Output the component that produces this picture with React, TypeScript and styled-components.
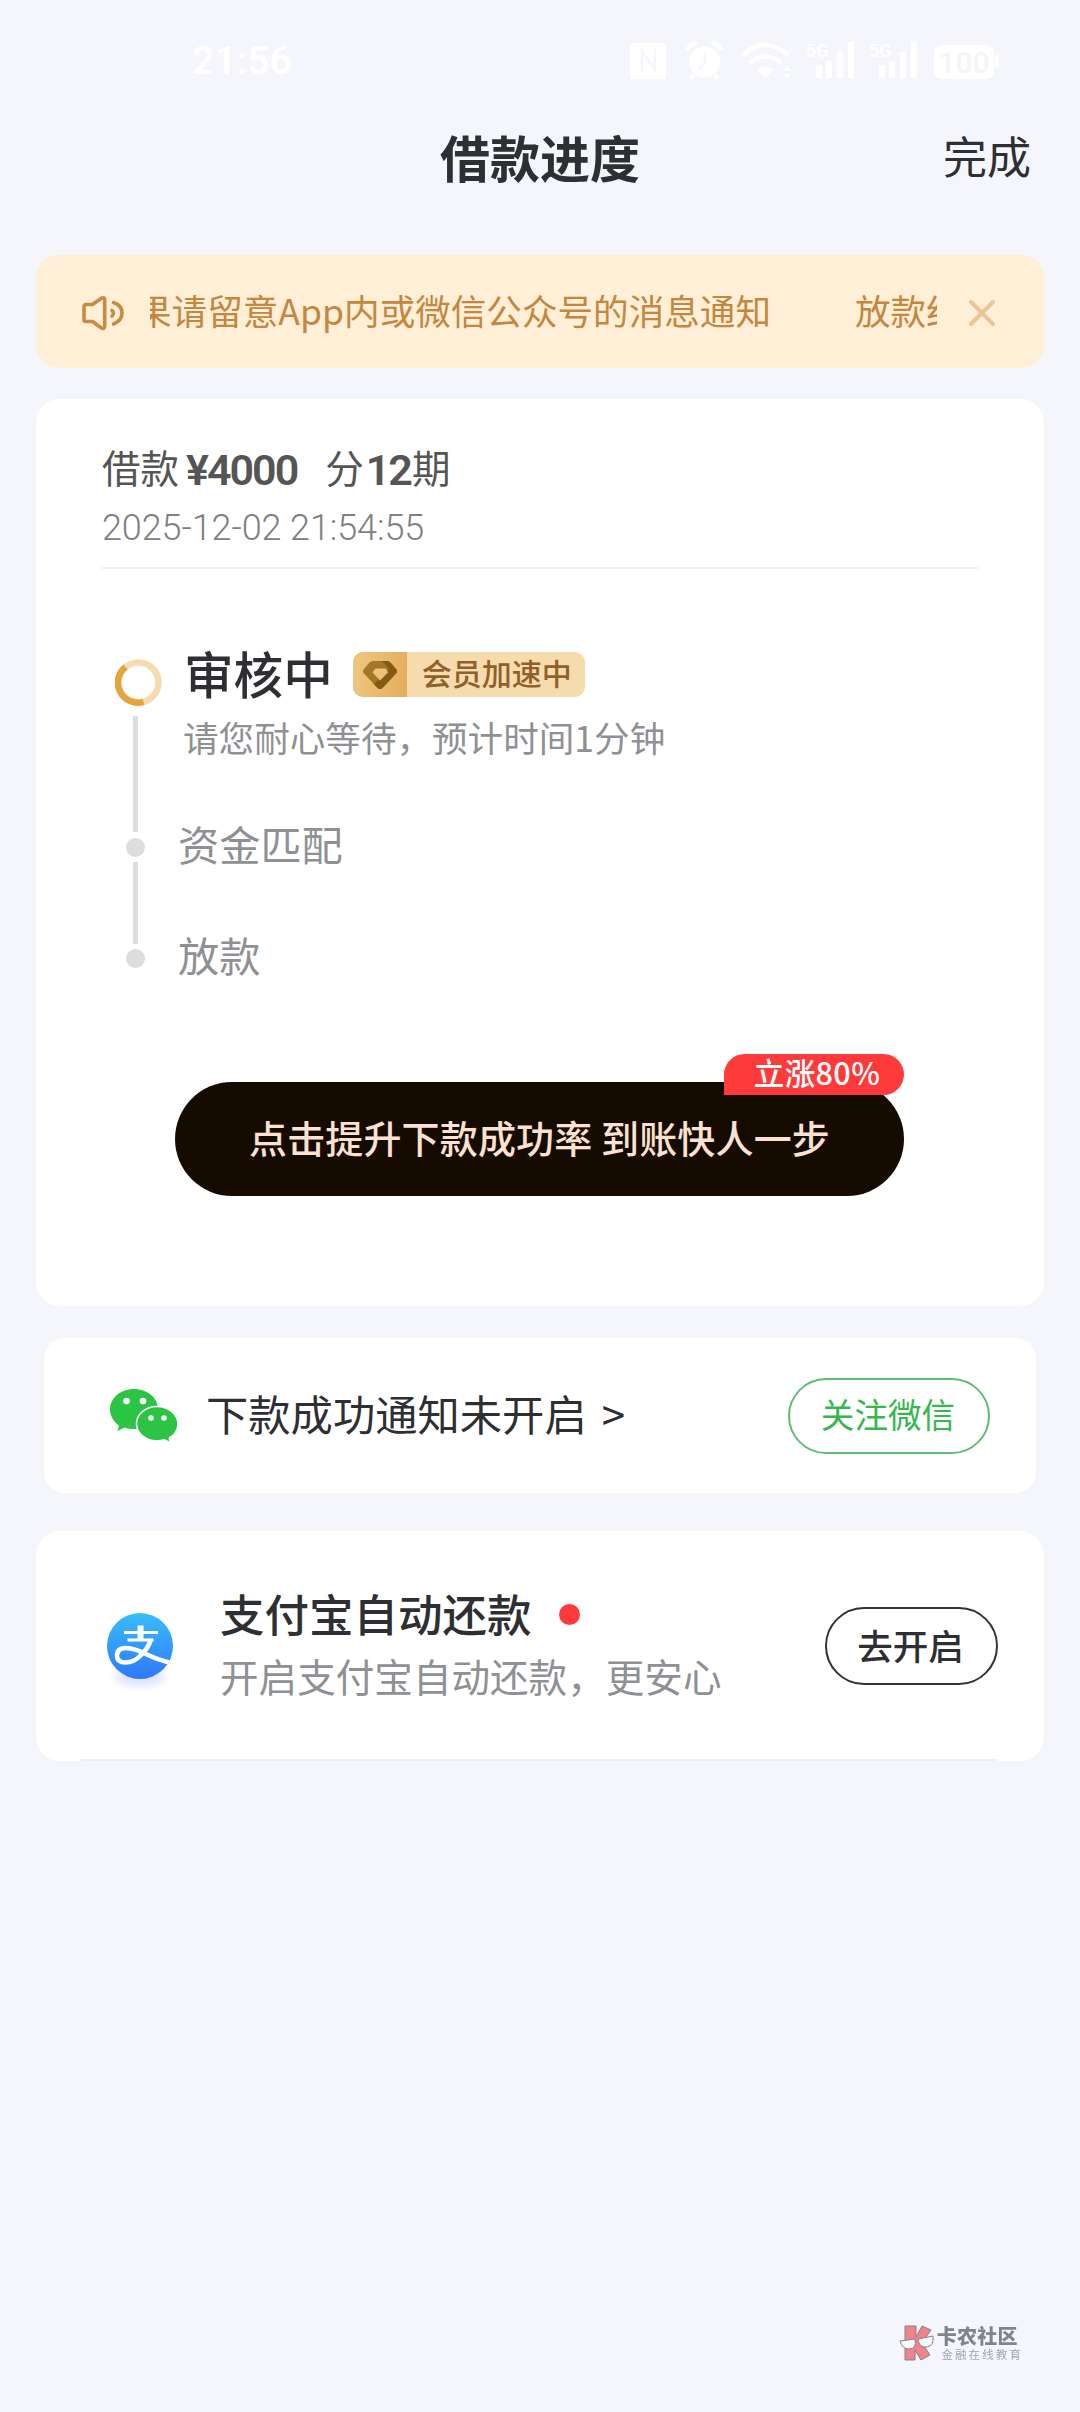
import React from "react";
import styled, { createGlobalStyle } from "styled-components";

const cjk = `Roboto, "Noto Sans CJK SC", sans-serif`;

const GlobalStyle = createGlobalStyle`
  body { margin: 0; background: #f4f6fb; }
  * { box-sizing: border-box; }
`;

const Screen = styled.main`
  width: 1080px;
  height: 2412px;
  display: flex;
  flex-direction: column;
  align-items: center;
  background: #f4f6fb;
  font-family: ${cjk};
  color: #2e2f33;
  overflow: hidden;
`;

const Line = styled.span<{ size: number; color?: string; weight?: number; lh?: number; spacing?: number; latin?: boolean }>`
  display: block;
  flex: none;
  white-space: pre;
  font-family: ${(p) => (p.latin ? cjk : `"Noto Sans CJK SC", sans-serif`)};
  font-size: ${(p) => p.size}px;
  font-weight: ${(p) => p.weight ?? 400};
  line-height: ${(p) => p.lh ?? 60}px;
  letter-spacing: ${(p) => p.spacing ?? 0}px;
  color: ${(p) => p.color ?? "#2e2f33"};
`;

const StatusBar = styled.div`
  width: 100%;
  height: 120px;
  flex: none;
  padding: 42px 81px 0 192px;
  display: flex;
  justify-content: space-between;
  align-items: flex-start;
  svg { overflow: visible; }
`;

const TitleBar = styled.header`
  width: 100%;
  height: 135px;
  flex: none;
  padding: 0 49px 0;
  display: grid;
  grid-template-columns: 1fr auto 1fr;
  align-items: start;
  > :nth-child(3) { justify-self: end; }
`;

const Notice = styled.section`
  width: 1008px;
  height: 113px;
  flex: none;
  border-radius: 22px;
  background: #ffefd7;
  display: flex;
  align-items: center;
  padding: 3px 48px 0 45px;
`;

const Marquee = styled.div`
  width: 787px;
  flex: none;
  margin: 0 31px 0 25px;
  overflow: hidden;
  display: flex;
  gap: 84px;
  padding-bottom: 6px;
  > :first-child { margin-left: -14px; }
`;

const Card = styled.section<{ w?: number; h: number; mt: number; r?: number }>`
  width: ${(p) => p.w ?? 1008}px;
  height: ${(p) => p.h}px;
  margin-top: ${(p) => p.mt}px;
  border-radius: ${(p) => p.r ?? 24}px;
  flex: none;
  background: #fff;
`;

const LoanCard = styled(Card)`
  padding: 37px 66px 0;
  display: flex;
  flex-direction: column;
`;

const Summary = styled.div`
  height: 133px;
  border-bottom: 2px solid #efeff0;
`;

const Amount = styled.div`
  display: flex;
  height: 62px;
`;

const Gap = styled.i<{ w: number }>`
  width: ${(p) => p.w}px;
  flex: none;
`;

const Steps = styled.div`
  display: grid;
  grid-template-columns: 66px 1fr;
  height: 435px;
  padding-top: 69px;
`;

const Rail = styled.div`
  display: flex;
  flex-direction: column;
  align-items: center;
  width: 66px;
  padding-top: 21px;
`;

const Stem = styled.i<{ h: number; mt: number; mb: number }>`
  flex: none;
  width: 5px;
  height: ${(p) => p.h}px;
  margin: ${(p) => p.mt}px 0 ${(p) => p.mb}px;
  background: #dddddd;
`;

const Dot = styled.i<{ size: number; color: string }>`
  flex: none;
  width: ${(p) => p.size}px;
  height: ${(p) => p.size}px;
  border-radius: 50%;
  background: ${(p) => p.color};
`;

const Spinner = styled.svg`
  flex: none;
  margin-left: 6px;
  display: block;
`;

const StepList = styled.div`
  padding-left: 10px;
`;

const StepHead = styled.div`
  display: flex;
  align-items: flex-start;
  padding-left: 6px;
  height: 68px;
`;

const Member = styled.div`
  margin: 14px 0 0 20px;
  width: 232px;
  height: 45px;
  border-radius: 10px;
  overflow: hidden;
  display: flex;
  background: #f6dcac;
`;

const MemberIcon = styled.div`
  width: 54px;
  height: 45px;
  display: flex;
  align-items: center;
  justify-content: center;
  margin-right: 15px;
  background: linear-gradient(100deg, #f0c781, #e3ad5c);
`;

const StepRow = styled.div<{ mt: number; ml?: number }>`
  margin-top: ${(p) => p.mt}px;
  padding-left: ${(p) => p.ml ?? 0}px;
`;

const Boost = styled.button`
  position: relative;
  align-self: center;
  margin: 78px 0 0 -1px;
  width: 729px;
  height: 114px;
  border: 0;
  border-radius: 57px;
  background: #150b00;
  display: flex;
  align-items: center;
  justify-content: center;
  padding: 0 0 5px;
`;

const Tag = styled.span`
  position: absolute;
  right: 0;
  top: -28px;
  width: 180px;
  height: 41px;
  border-radius: 21px 21px 21px 0;
  background: #ff3a3a;
  display: flex;
  justify-content: center;
  align-items: center;
  padding: 0 0 5px 6px;
`;

const ServiceCard = styled(Card)<{ pl: number; pr: number; line?: boolean }>`
  display: flex;
  align-items: center;
  padding: 0 ${(p) => p.pr}px 0 ${(p) => p.pl}px;
  background: ${(p) => p.line ? "linear-gradient(#efeff3, #efeff3) 45px 100% / 917px 2px no-repeat, #fff" : "#fff"};
`;

const Pill = styled.button<{ w: number; h: number; color: string }>`
  margin-left: auto;
  width: ${(p) => p.w}px;
  height: ${(p) => p.h}px;
  flex: none;
  border: 2px solid ${(p) => p.color};
  border-radius: 40px;
  background: transparent;
  padding: 0 2px 3px 0;
  display: flex;
  align-items: center;
  justify-content: center;
`;

const NoticeTitle = styled.div`
  display: flex;
  align-items: center;
  padding-bottom: 5px;
`;

const Copy = styled.div`
  margin-left: 40px;
  margin-bottom: 5px;
`;

const CopyHead = styled.div`
  display: flex;
  align-items: center;
  gap: 27px;
  > i { margin-top: 4px; }
`;

const Watermark = styled.footer`
  margin: auto 57px 51px auto;
  display: flex;
  align-items: center;
  gap: 3px;
  opacity: 0.9;
`;

const WatermarkText = styled.div`
  display: flex;
  flex-direction: column;
`;

const Signal = ({ x }: { x: number }) => (
  <g transform={`translate(${x} 0)`}>
    <text x="0" y="15" fontFamily="Roboto, sans-serif" fontWeight="700" fontSize="18" fill="#fff">5G</text>
    <path d="M10 23h6v13h-6zM20 19h6v17h-6zM31 10h6v26h-6zM42 0h6v36h-6z" />
  </g>
);

const StatusIcons = () => (
  <svg width="369" height="38" viewBox="0 0 369 38" fill="#fff">
    <rect x="0" y="1" width="36" height="36" rx="4" />
    <path d="M12 31V9l13 19V7" fill="none" stroke="#f4f6fb" strokeWidth="2.5" />
    <circle cx="74.5" cy="20" r="15.5" />
    <path d="M75 11v10l-6 6" fill="none" stroke="#f4f6fb" strokeWidth="2.5" />
    <path d="M57 8q3-6 10-7M92 8q-3-6-10-7M64 33l-3 4M85 33l3 4" fill="none" stroke="#fff" strokeWidth="4" />
    <g fill="none" stroke="#fff" strokeWidth="4.5">
      <path d="M113 13q22-20 45 0M120 21q15-13 31 0" />
    </g>
    <path d="M127 28q8-7 17 0l-8.500 8zM153 29l4-5 4 5zM153 32l4 5 4-5z" />
    <Signal x={176} />
    <Signal x={239} />
    <rect x="304" y="3" width="60" height="34" rx="8" />
    <rect x="365" y="13" width="4" height="13" rx="2" />
    <text x="334" y="30.500" textAnchor="middle" fontFamily="Roboto, sans-serif" fontWeight="500" fontSize="30" fill="#f4f5f8">100</text>
  </svg>
);

const Speaker = () => (
  <svg width="44" height="36" viewBox="0 0 44 36" fill="none" stroke="#c98a45" strokeWidth="3.600" strokeLinejoin="round" strokeLinecap="round">
    <path d="M5 9.500h6.500L20.500 3.200q3.200-1.600 3.200 1.900v26q0 3.500-3.200 1.900L11.500 26.500H5q-2 0-2-2v-13q0-2 2-2z" />
    <path d="M31 15.500q3 2.500 0 5.500M32.500 7.500q8.500 3 8.500 10.500t-8.500 11" />
  </svg>
);

const WeChat = () => (
  <svg width="68" height="54" viewBox="0 0 68 54">
    <path d="M24 0C10.500 0 0 9 0 20.500c0 6.500 3.500 12 9 16L7.500 42l7-3.500c3 1 6 1.500 9.500 1.500 13.500 0 24-9 24-20S37.500 0 24 0z" fill="#2bc445" />
    <path d="M47 17.500c-11.500 0-20.500 7.800-20.500 17.300S35.500 52 47 52c2.500 0 5-.4 7.500-1.200L60.500 54l-1.200-5C64.500 46 68 41 68 35c0-9.500-9.500-17.500-21-17.500z" fill="#2bc445" stroke="#fff" strokeWidth="1.600" />
    <g fill="#fff"><circle cx="16.500" cy="12" r="3.300" /><circle cx="33" cy="12" r="3.300" /><circle cx="41" cy="29" r="2.800" /><circle cx="54" cy="29" r="2.800" /></g>
  </svg>
);

const Alipay = () => (
  <svg width="80" height="92" viewBox="-7 -13 80 92">
    <defs>
      <linearGradient id="ali" x1="0" y1="0" x2="0" y2="1"><stop offset="0" stopColor="#38bdfd" /><stop offset="1" stopColor="#2f78fa" /></linearGradient>
      <filter id="soft" x="-30%" y="-50%" width="160%" height="200%"><feGaussianBlur stdDeviation="4" /></filter>
      <clipPath id="disc"><circle cx="33" cy="33" r="33" /></clipPath>
    </defs>
    <ellipse cx="33" cy="64" rx="25" ry="9" fill="#d5d9fd" opacity=".8" filter="url(#soft)" />
    <circle cx="33" cy="33" r="33" fill="url(#ali)" />
    <g fill="none" stroke="#fff" clipPath="url(#disc)">
      <path d="M33.500 12.500v14" strokeWidth="6" />
      <path d="M17 19.500h34M20.500 27h26" strokeWidth="3" />
      <path d="M44 26Q41 36 33.500 42.500 27 49.500 18.500 49.500 10 49.500 10 42.500q0-7.500 9-7.500 8 0 21 6.500 11 5.500 25 8.500" strokeWidth="4.600" />
    </g>
  </svg>
);

const Gem = () => (
  <svg width="34" height="28" viewBox="0 0 34 28">
    <path d="M10 0h14q2 0 3.500 1.500L33 8q2 2.500 0 4.500L20 26.500q-3 3-6 0L1 12.500q-2-2 0-4.500L6.500 1.500Q8 0 10 0z" fill="#a27827" />
    <path d="M27.500 1.500L33 8q2 2.500 0 4.500L20 26.500q-3 3-6 0L11 23 26 8l-7-8h5q2 0 3.500 1.500z" fill="#875a12" />
    <path d="M13 7.500h9q1 0 3 4L17 19.500l-7.500-8q2.500-4 3.500-4z" fill="#edc27b" />
  </svg>
);

const MarkLogo = () => (
  <svg width="35" height="36" viewBox="0 0 35 36" stroke="#77777c" strokeWidth="1">
    <path d="M6 1h11v11l6-11 9 4-9 13 8 12-9 5-6-10v10H6z" fill="#f0777d" />
    <path d="M1 16l15-2q2 10-6 10-7 0-9-8zM19 14l15-3q1 10-6 11-8 1-9-8z" fill="#f8f8fc" />
  </svg>
);

export default function App() {
  return (
    <Screen>
      <GlobalStyle />
      <StatusBar>
        <Line latin size={39} weight={600} lh={38} color="#fff">21:56</Line>
        <StatusIcons />
      </StatusBar>
      <TitleBar>
        <span />
        <Line size={50} weight={700} lh={72}>借款进度</Line>
        <Line size={44} lh={70}>完成</Line>
      </TitleBar>
      <Notice>
        <Speaker />
        <Marquee>
          <Line size={35.600} color="#c4873f">果请留意App内或微信公众号的消息通知</Line>
          <Line size={35.600} color="#c4873f">放款结果</Line>
        </Marquee>
        <svg width="28" height="28" viewBox="0 0 28 28" stroke="#ecc596" strokeWidth="4" strokeLinecap="round"><path d="M3 3l22 22M25 3L3 25" /></svg>
      </Notice>

      <LoanCard h={907} mt={31}>
        <Summary>
          <Amount>
            <Line size={38.500} color="#555">借款</Line><Gap w={7} />
            <Line latin size={43} weight={600} lh={69} spacing={-2} color="#555">¥4000</Line><Gap w={28} />
            <Line size={38.500} color="#555">分</Line><Gap w={2} />
            <Line latin size={43} weight={600} lh={69} spacing={-2} color="#555">12</Line><Gap w={1} />
            <Line size={38.500} color="#555">期</Line>
          </Amount>
          <Line latin size={36} weight={300} lh={60} spacing={-0.100} color="#808080">2025-12-02 21:54:55</Line>
        </Summary>
        <Steps>
          <Rail>
            <Spinner width="47" height="47" viewBox="0 0 47 47" fill="none" strokeWidth="6.500">
              <circle cx="23.500" cy="23.500" r="20" stroke="#f5dcae" />
              <path d="M10.500 8A20 20 0 0 0 28.500 42.900" stroke="#e3a63e" />
            </Spinner>
            <Stem h={116} mt={10} mb={6} />
            <Dot size={19} color="#dddddd" />
            <Stem h={82} mt={5} mb={5} />
            <Dot size={19} color="#dddddd" />
          </Rail>
          <StepList>
            <StepHead>
              <Line size={49.600} weight={500} lh={68}>审核中</Line>
              <Member>
                <MemberIcon><Gem /></MemberIcon>
                <Line size={30} weight={500} lh={41} color="#90602a">会员加速中</Line>
              </Member>
            </StepHead>
            <StepRow mt={1} ml={5}><Line size={35.600} color="#8f9094">请您耐心等待，预计时间1分钟</Line></StepRow>
            <StepRow mt={46}><Line size={41.200} color="#8f9094">资金匹配</Line></StepRow>
            <StepRow mt={51}><Line size={41.200} color="#8f9094">放款</Line></StepRow>
          </StepList>
        </Steps>
        <Boost>
          <Line size={38} weight={500} spacing={0.150} color="#fbe1d1">点击提升下款成功率 到账快人一步</Line>
          <Tag><Line size={30.500} weight={500} lh={36} spacing={0.400} color="#fff">立涨80%</Line></Tag>
        </Boost>
      </LoanCard>

      <ServiceCard w={992} h={155} mt={32} r={21} pl={66} pr={46}>
        <WeChat />
        <Gap w={28} />
        <NoticeTitle>
          <Line size={42.300}>下款成功通知未开启</Line>
          <Gap w={15} />
          <Line size={42} lh={64}>&gt;</Line>
        </NoticeTitle>
        <Pill w={202} h={76} color="#62bd74"><Line size={33.600} color="#36b84e">关注微信</Line></Pill>
      </ServiceCard>

      <ServiceCard h={230} mt={38} pl={64} pr={46} line>
        <Alipay />
        <Copy>
          <CopyHead>
            <Line size={44.500} weight={500} lh={63}>支付宝自动还款</Line>
            <Dot size={21} color="#ff3a3a" />
          </CopyHead>
          <Line size={38.600} lh={62} color="#8f9094">开启支付宝自动还款，更安心</Line>
        </Copy>
        <Pill w={173} h={78} color="#333337"><Line size={35.500} weight={500}>去开启</Line></Pill>
      </ServiceCard>

      <Watermark>
        <MarkLogo />
        <WatermarkText>
          <Line size={20} weight={900} lh={22} spacing={0.300} color="#77787d">卡农社区</Line>
          <Line size={11.500} lh={14} spacing={2.100} color="#9a9ba0"> 金融在线教育</Line>
        </WatermarkText>
      </Watermark>
    </Screen>
  );
}
